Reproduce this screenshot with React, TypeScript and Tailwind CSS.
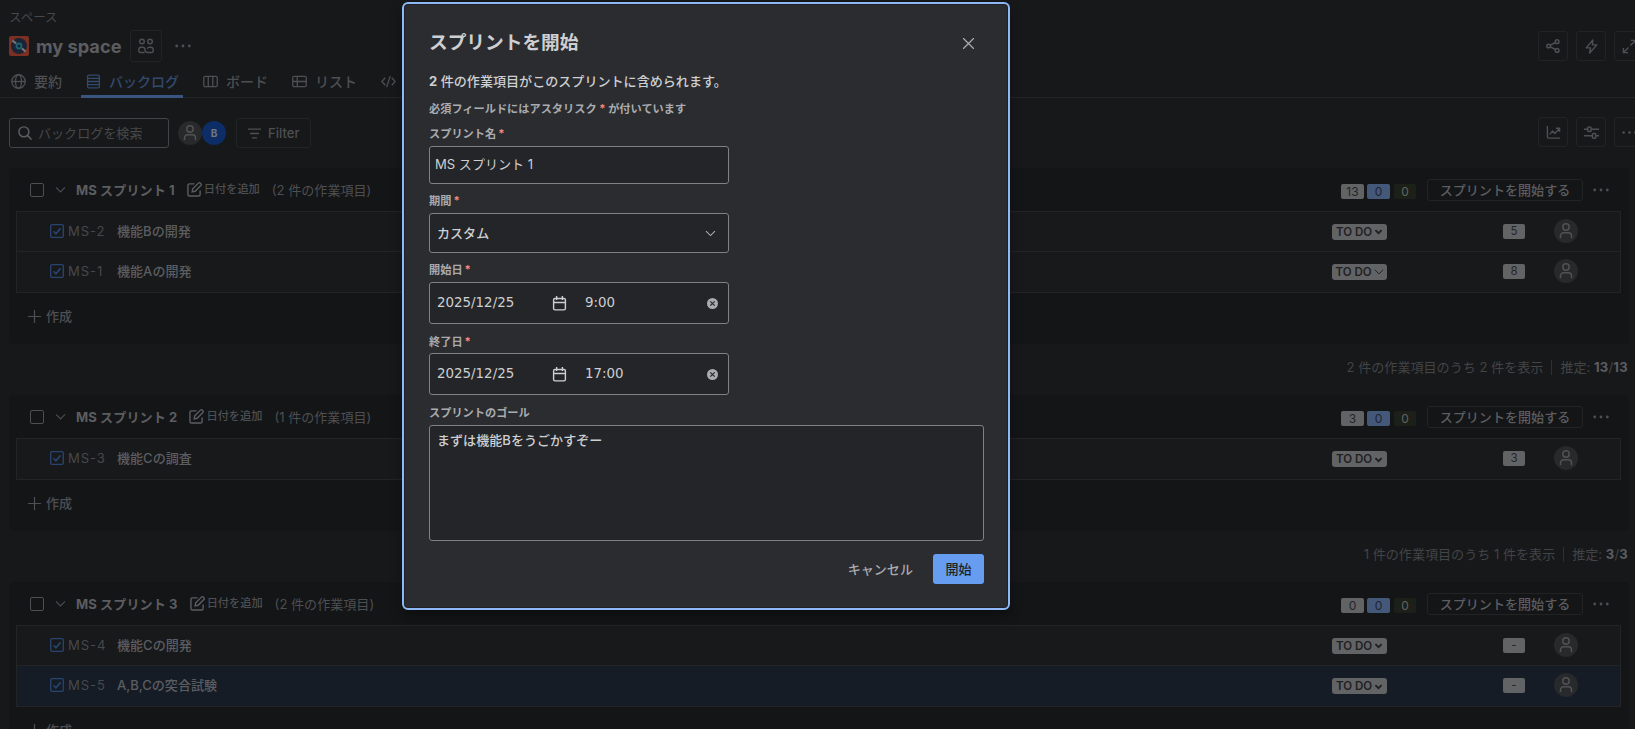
import type { ReactNode } from 'react';

interface Issue {
    key: string;
    title: string;
    points: string;
    selected?: boolean;
    thinChevron?: boolean;
}

interface Sprint {
    name: string;
    total: number;
    issues: Issue[];
}

const sprints: Sprint[] = [
    {
        name: 'MS スプリント 1',
        total: 13,
        issues: [
            { key: 'MS-2', title: '機能Bの開発', points: '5' },
            { key: 'MS-1', title: '機能Aの開発', points: '8', thinChevron: true },
        ],
    },
    {
        name: 'MS スプリント 2',
        total: 3,
        issues: [{ key: 'MS-3', title: '機能Cの調査', points: '3' }],
    },
    {
        name: 'MS スプリント 3',
        total: 0,
        issues: [
            { key: 'MS-4', title: '機能Cの開発', points: '-' },
            { key: 'MS-5', title: 'A,B,Cの突合試験', points: '-', selected: true },
        ],
    },
];

// All line icons share a 16px grid
function Icon({ children, className = 'w-[15px] h-[15px]', width = 1.4 }: { children: ReactNode; className?: string; width?: number }) {
    return (
        <svg className={`${className} shrink-0`} viewBox="0 0 16 16" fill="none" stroke="currentColor" strokeWidth={width}>
            {children}
        </svg>
    );
}

function Dots({ className = 'w-4 h-4' }: { className?: string }) {
    return (
        <svg className={`${className} shrink-0`} viewBox="0 0 16 16" fill="currentColor">
            <circle cx="1.7" cy="8" r="1.4" />
            <circle cx="8" cy="8" r="1.4" />
            <circle cx="14.3" cy="8" r="1.4" />
        </svg>
    );
}

function Person() {
    return (
        <div className="w-6 h-6 rounded-full bg-[#28292b] text-[#515254] flex items-center justify-center shrink-0">
            <Icon className="w-4 h-4" width={1.5}>
                <circle cx="8" cy="4" r="3.2" />
                <path d="M2.5 15.2v-2.4a3 3 0 0 1 3-3h5a3 3 0 0 1 3 3v2.4" />
            </Icon>
        </div>
    );
}

function IconButton({ children }: { children: ReactNode }) {
    return (
        <div className="w-[30px] h-[30px] shrink-0 rounded-[3px] border border-[#222325] text-[#4d4f52] flex items-center justify-center">
            {children}
        </div>
    );
}

function Tab({ icon, label, active = false }: { icon: ReactNode; label: string; active?: boolean }) {
    return (
        <div className={`relative h-[33px] pl-[5px] pr-1 flex items-center gap-2 shrink-0 text-sm font-medium ${active ? 'text-[#324a6c]' : 'text-[#4d4f52]'}`}>
            {icon}
            <span className="leading-[33px]">{label}</span>
            {active && <div className="absolute left-0 right-0 bottom-0 h-[3px] bg-[#3a5580]" />}
        </div>
    );
}

function IssueRow({ issue }: { issue: Issue }) {
    return (
        <div className={`h-10 pb-[2px] pl-[33px] pr-[42px] flex items-center border-b last:border-b-0 border-[#222426] ${issue.selected ? 'bg-[#151c26]' : 'bg-[#18191b]'}`}>
            <Icon className="w-[14px] h-[14px] text-[#28446f]" width={1.5}>
                <rect x="0.8" y="0.8" width="14.4" height="14.4" rx="1.6" />
                <path d="M4 8.2l2.8 2.9L12 5" strokeWidth="1.8" />
            </Icon>
            <span className="w-[49px] ml-1 text-[#46484b] tracking-[0.9px]">{issue.key}</span>
            <span className="flex-1 text-[#5c5d60] font-medium">{issue.title}</span>
            <div className="w-[55px] h-4 mt-[2px] rounded-[3px] bg-[#626365] text-[#1f2022] flex items-center justify-center gap-[2px] text-[11.5px] font-semibold">
                <span>TO DO</span>
                <Icon className={issue.thinChevron ? 'w-[10px] h-[10px]' : 'w-[9px] h-[9px]'} width={issue.thinChevron ? 1.6 : 3.4}>
                    <path d={issue.thinChevron ? 'M1.5 4.5L8 11l6.5-6.5' : 'M2.5 5.5L8 11l5.5-5.5'} />
                </Icon>
            </div>
            <div className="w-[22px] h-[15px] ml-[116px] mr-[29px] mt-[1px] rounded-[2px] bg-[#626365] text-[#242527] text-[11.5px] leading-[15px] text-center">
                {issue.points}
            </div>
            <Person />
        </div>
    );
}

function SprintPanel({ sprint }: { sprint: Sprint }) {
    const count = sprint.issues.length;
    const points = sprint.total;

    return (
        <>
            <section className="mx-[9px] mr-[6px] px-[7px] pr-[8px] rounded-[5px] bg-[#141517]">
                <div className="h-[43px] pl-[14px] pr-[12px] flex items-center">
                    <div className="w-[14px] h-[14px] border border-[#4d4f52] rounded-[2px]" />
                    <Icon className="w-[11px] h-[11px] ml-[11px] text-[#4d4f52]" width={1.5}>
                        <path d="M1.5 5L8 11.5 14.5 5" />
                    </Icon>
                    <span className="ml-[10px] font-bold text-[#5c5d60] tracking-[0.1px]">{sprint.name}</span>
                    <Icon className="w-[15px] h-[15px] ml-3 mb-[1px] text-[#5c5d60]" width={1.5}>
                        <path d="M8 2H2.6A1.6 1.6 0 0 0 1 3.6v9.8A1.6 1.6 0 0 0 2.6 15h9.8a1.6 1.6 0 0 0 1.6-1.6V9" />
                        <path d="M5.5 10.5l.6-3.2L12.2 1.2a1.4 1.4 0 0 1 2 0l.6.6a1.4 1.4 0 0 1 0 2L8.7 9.900z" />
                    </Icon>
                    <span className="ml-[2px] mb-[2px] text-[11.2px] text-[#4d4f52] font-medium">日付を追加</span>
                    <span className="ml-3 text-[#4d4f52]">({count} 件の作業項目)</span>

                    <div className="ml-auto flex items-center text-xs leading-[15px] text-center">
                        <span className="w-[23px] h-[15px] mt-[3px] rounded-[2px] bg-[#626365] text-[#242527]">{points}</span>
                        <span className="w-[23px] h-[15px] mt-[3px] ml-[3px] rounded-[2px] bg-[#44587a] text-[#1c2533]">0</span>
                        <span className="w-[22px] h-[15px] mt-[3px] ml-1 rounded-[2px] bg-[#1b2018] text-[#626365]">0</span>
                    </div>
                    <div className="w-[156px] h-[22px] ml-[11px] rounded-[3px] border border-[#222325] text-[#5c5d60] font-medium leading-5 text-center">
                        スプリントを開始する
                    </div>
                    <Dots className="w-4 h-4 ml-[10px] text-[#4d4f52]" />
                </div>

                <div className="border border-[#222426]">
                    {sprint.issues.map((issue) => (
                        <IssueRow key={issue.key} issue={issue} />
                    ))}
                </div>

                <div className="h-[51px] pt-[13px] pl-[12px] flex items-start text-[#4d4f52] font-medium">
                    <Icon className="w-[13px] h-[13px] mt-[4px]" width={1.5}>
                        <path d="M8 0v16M0 8h16" />
                    </Icon>
                    <span className="ml-[5px] leading-5">作成</span>
                </div>
            </section>

            <div className="h-[51px] pr-[7px] pb-[5px] flex items-center justify-end text-[#424446]">
                <span>{count} 件の作業項目のうち {count} 件を表示</span>
                <span className="w-px h-[15px] mx-2 bg-[#2d2f31]" />
                <span>
                    推定: <b className="text-[#5c5d60] tracking-[0.3px]">{points}</b>/<b className="text-[#5c5d60] tracking-[0.3px]">{points}</b>
                </span>
            </div>
        </>
    );
}

function Label({ children, required = false }: { children: ReactNode; required?: boolean }) {
    return (
        <div className="text-[11.2px] leading-4 font-bold text-[#a9abaf]">
            {children}
            {required && <span className="ml-[2px] text-[#f5877f]">*</span>}
        </div>
    );
}

function DateField({ date, time }: { date: string; time: string }) {
    return (
        <div className="w-[300px] h-[42px] pl-[7px] pr-[10px] flex items-center rounded-[3px] border border-[#7e8188] bg-[#242528] text-[#cecfd2] font-['DejaVu_Sans',sans-serif] text-[13.4px]">
            <span className="w-[115px]">{date}</span>
            <Icon className="w-[15px] h-[15px]" width={1.5}>
                <rect x="1.7" y="2.7" width="12.6" height="12.1" rx="1.5" />
                <path d="M1.7 7h12.6M4.9 0v4.2M11.1 0v4.2" />
            </Icon>
            <span className="ml-[18px] flex-1">{time}</span>
            <svg className="w-[11px] h-[11px] mt-[1px]" viewBox="0 0 12 12">
                <circle cx="6" cy="6" r="6" fill="#a9abaf" />
                <path d="M3.6 3.6l4.8 4.8M8.4 3.6L3.6 8.4" stroke="#242528" strokeWidth="1.2" />
            </svg>
        </div>
    );
}

function StartSprintDialog() {
    return (
        <div role="dialog" className="absolute left-[402px] top-[2px] w-[608px] h-[608px] rounded-[6px] border-2 border-[#8fb8f6] bg-[#2b2c2f] shadow-[inset_0_0_0_1px_#202124,0_6px_12px_rgba(0,0,0,0.35)] pl-[25px] pr-6 pt-[25px] flex flex-col">
            <div className="h-7 flex items-center justify-between">
                <h1 className="text-[18.7px] leading-7 font-bold text-[#cecfd2]">スプリントを開始</h1>
                <Icon className="w-[11px] h-[11px] mr-[10px] text-[#a9abaf]" width={1.8}>
                    <path d="M0 0l16 16M16 0L0 16" />
                </Icon>
            </div>
            <p className="mt-[14px] leading-5 font-medium text-[#cecfd2]">
                <b>2</b> 件の作業項目がこのスプリントに含められます。
            </p>
            <p className="mt-[10px] text-[11.2px] leading-4 font-bold text-[#a9abaf]">
                必須フィールドにはアスタリスク <span className="text-[#f5877f]">*</span> が付いています
            </p>

            <div className="mt-[9px]">
                <Label required>スプリント名</Label>
            </div>
            <div className="mt-1 w-[300px] h-[38px] px-[5px] rounded-[3px] border border-[#7e8188] bg-[#242528] text-[#cecfd2] leading-[34px]">
                MS スプリント 1
            </div>

            <div className="mt-[9px]">
                <Label required>期間</Label>
            </div>
            <div className="mt-1 w-[300px] h-10 pl-[7px] pr-3 flex items-center justify-between rounded-[3px] border border-[#7e8188] bg-[#242528] text-[#cecfd2] font-medium">
                カスタム
                <Icon className="w-[11px] h-[11px] text-[#a9abaf]" width={1.6}>
                    <path d="M1.5 4.5L8 11l6.5-6.5" />
                </Icon>
            </div>

            <div className="mt-[9px]">
                <Label required>開始日</Label>
            </div>
            <div className="mt-1">
                <DateField date="2025/12/25" time="9:00" />
            </div>

            <div className="mt-[10px]">
                <Label required>終了日</Label>
            </div>
            <div className="mt-[3px]">
                <DateField date="2025/12/25" time="17:00" />
            </div>

            <div className="mt-[10px]">
                <Label>スプリントのゴール</Label>
            </div>
            <div className="mt-1 h-[116px] px-[7px] pt-1 rounded-[3px] border border-[#7e8188] bg-[#242528] text-[#cecfd2] leading-5 font-medium">
                まずは機能Bをうごかすぞー
            </div>

            <div className="mt-[13px] flex justify-end items-center leading-[30px] font-medium">
                <span className="mr-5 text-[#a9abaf]">キャンセル</span>
                <span className="w-[51px] h-[30px] rounded-[3px] bg-[#669df1] text-[#1f1f21] text-center">開始</span>
            </div>
        </div>
    );
}

export default function App() {
    return (
        <div lang="ja" className="relative w-full h-[729px] overflow-hidden bg-[#17181a] font-['Inter','Noto_Sans_CJK_JP',sans-serif] text-[13.07px] leading-5">
            <header>
                <div className="h-[30px] pl-[9px] pt-2 text-[12.5px] text-[#46484b]">スペース</div>
                <div className="h-8 pl-[9px] flex items-center">
                    {/* Space avatar */}
                    <svg className="w-5 h-5" viewBox="0 0 20 20">
                        <rect width="20" height="20" rx="2" fill="#7c3024" />
                        <circle cx="10" cy="10" r="8" fill="#1b2435" />
                        <circle cx="10" cy="10" r="2.5" fill="none" stroke="#1c6570" strokeWidth="1.8" />
                        <path d="M3.5 4.5l3.5 3M13 12.5l3.5 3" stroke="#747678" strokeWidth="2.2" />
                    </svg>
                    <span className="w-[86px] ml-[7px] text-[18.2px] font-bold text-[#5c5d60] whitespace-nowrap">my space</span>
                    <div className="w-8 h-8 ml-2 rounded-[3px] border border-[#222325] text-[#4d4f52] flex items-center justify-center">
                        <Icon className="w-4 h-4">
                            <circle cx="4" cy="3.5" r="2.3" />
                            <circle cx="12" cy="3.5" r="2.3" />
                            <path d="M6.5 14.5H2.2A1.400 1.400 0 0 1 .8 13.100V11.800a2.500 2.500 0 0 1 2.500-2.500h1.200a2.500 2.500 0 0 1 2.500 2.500 2.700 2.700 0 0 0 2.700 2.700h4.100a1.400 1.400 0 0 0 1.400-1.400V11.800a2.500 2.500 0 0 0-2.500-2.500h-1.200a2.500 2.500 0 0 0-2.200 1.300" />
                        </Icon>
                    </div>
                    <Dots className="w-4 h-4 ml-[13px] text-[#4d4f52]" />
                    <div className="ml-auto -mr-[9px] flex gap-2">
                        <IconButton>
                            <Icon className="w-[14px] h-[14px]" width={1.7}>
                                <circle cx="3" cy="8" r="2.1" />
                                <circle cx="12.7" cy="3" r="2.1" />
                                <circle cx="12.7" cy="13" r="2.1" />
                                <path d="M4.9 7l5.9-3M4.9 9l5.9 3" />
                            </Icon>
                        </IconButton>
                        <IconButton>
                            <Icon width={1.5}>
                                <path d="M9.5 1L2.3 9.5h4.6L6 15l7.7-8.7H9z" strokeLinejoin="round" />
                            </Icon>
                        </IconButton>
                        <IconButton>
                            <Icon width={1.5}>
                                <path d="M9.5 1.5h5v5M14.5 1.5L9 7M6.5 14.5h-5v-5M1.5 14.5L7 9" />
                            </Icon>
                        </IconButton>
                    </div>
                </div>

                <nav className="mt-[3px] h-[33px] pl-[6px] flex gap-[15px] border-b border-[#242527]">
                    <Tab
                        label="要約"
                        icon={
                            <Icon>
                                <circle cx="8" cy="8" r="7.2" />
                                <ellipse cx="8" cy="8" rx="3.2" ry="7.2" />
                                <path d="M.8 8h14.4" />
                            </Icon>
                        }
                    />
                    <Tab
                        active
                        label="バックログ"
                        icon={
                            <Icon>
                                <rect x="1.7" y="1.2" width="12.6" height="13.6" rx="1.5" />
                                <path d="M1.7 4.7h12.6M1.7 8h12.6M1.7 11.3h12.6" />
                            </Icon>
                        }
                    />
                    <Tab
                        label="ボード"
                        icon={
                            <Icon>
                                <rect x=".8" y="2.5" width="14.4" height="11" rx="1.5" />
                                <path d="M5.6 2.5v11M10.4 2.5v11" />
                            </Icon>
                        }
                    />
                    <Tab
                        label="リスト"
                        icon={
                            <Icon>
                                <rect x=".8" y="2.5" width="14.4" height="11" rx="1.5" />
                                <path d="M5.6 2.5v11M.8 8h14.4" />
                            </Icon>
                        }
                    />
                    <Tab
                        label="開発"
                        icon={
                            <Icon>
                                <path d="M4.5 4L.9 8l3.6 4M11.5 4l3.6 4-3.6 4M10 2L6 14" />
                            </Icon>
                        }
                    />
                </nav>
            </header>

            <div className="h-[70px] pl-[9px] flex items-center">
                <div className="w-40 h-[30px] pl-2 flex items-center rounded-[3px] border border-[#424447] text-[#46484b]">
                    <Icon className="w-[14px] h-[14px] text-[#5c5d60]" width={1.7}>
                        <circle cx="6.7" cy="6.7" r="5.7" />
                        <path d="M11 11l4.5 4.5" />
                    </Icon>
                    <span className="ml-[6px] pb-px">バックログを検索</span>
                </div>
                <div className="ml-[9px] flex">
                    <Person />
                    <div className="w-6 h-6 rounded-full bg-[#0c2d66] text-[#74787f] text-[10px] font-bold leading-6 text-center">B</div>
                </div>
                <div className="w-[75px] h-[30px] ml-[10px] pl-[11px] flex items-center rounded-[3px] border border-[#222325] text-[#4d4f52] font-medium">
                    <Icon className="w-[13px] h-[13px]" width={1.6}>
                        <path d="M0 2.5h16M2.5 8h11M5 13.5h6" />
                    </Icon>
                    <span className="ml-[7px]">Filter</span>
                </div>
                <div className="ml-auto -mr-[9px] mb-[2px] flex gap-2">
                    <IconButton>
                        <Icon width={1.5}>
                            <path d="M1.5 1v11.5a1.5 1.5 0 0 0 1.500 1.500h12M4 10l3-3.500L9.500 9 14 4M10.500 3.500h4v4" />
                        </Icon>
                    </IconButton>
                    <IconButton>
                        <Icon width={1.6}>
                            <path d="M0 4.5h4M8 4.5h8M0 11.5h9M13 11.5h3" />
                            <rect x="4" y="2" width="3.5" height="5" rx="1" />
                            <rect x="9" y="9" width="3.5" height="5" rx="1" />
                        </Icon>
                    </IconButton>
                    <IconButton>
                        <Dots className="w-[15px] h-[15px]" />
                    </IconButton>
                </div>
            </div>

            {sprints.map((sprint) => (
                <SprintPanel key={sprint.name} sprint={sprint} />
            ))}

            <StartSprintDialog />
        </div>
    );
}
